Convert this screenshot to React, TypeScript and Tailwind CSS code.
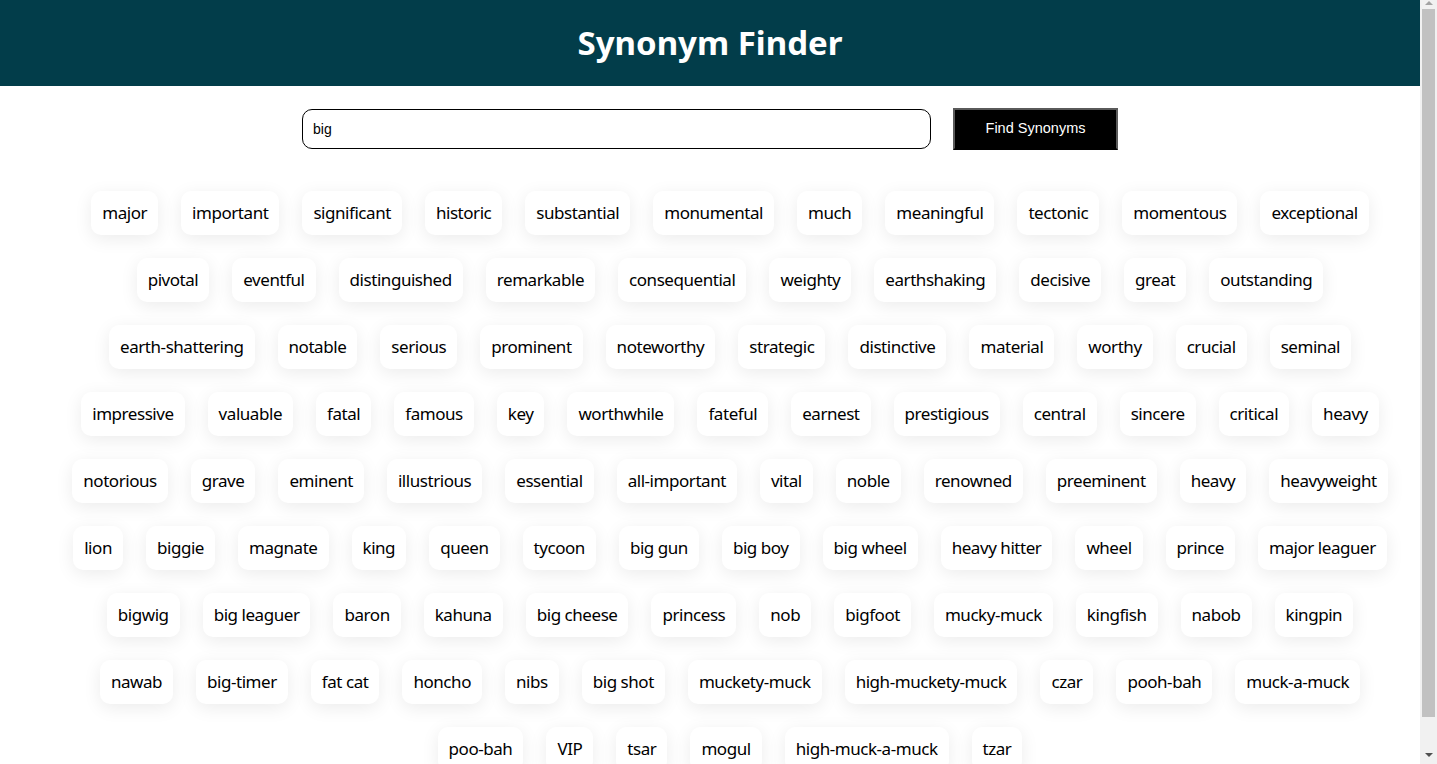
import { useState } from "react";

const synonyms = [
  "major", "important", "significant", "historic", "substantial", "monumental", "much", "meaningful", "tectonic", "momentous", "exceptional",
  "pivotal", "eventful", "distinguished", "remarkable", "consequential", "weighty", "earthshaking", "decisive", "great", "outstanding",
  "earth-shattering", "notable", "serious", "prominent", "noteworthy", "strategic", "distinctive", "material", "worthy", "crucial", "seminal",
  "impressive", "valuable", "fatal", "famous", "key", "worthwhile", "fateful", "earnest", "prestigious", "central", "sincere", "critical", "heavy",
  "notorious", "grave", "eminent", "illustrious", "essential", "all-important", "vital", "noble", "renowned", "preeminent", "heavy", "heavyweight",
  "lion", "biggie", "magnate", "king", "queen", "tycoon", "big gun", "big boy", "big wheel", "heavy hitter", "wheel", "prince", "major leaguer",
  "bigwig", "big leaguer", "baron", "kahuna", "big cheese", "princess", "nob", "bigfoot", "mucky-muck", "kingfish", "nabob", "kingpin",
  "nawab", "big-timer", "fat cat", "honcho", "nibs", "big shot", "muckety-muck", "high-muckety-muck", "czar", "pooh-bah", "muck-a-muck",
  "poo-bah", "VIP", "tsar", "mogul", "high-muck-a-muck", "tzar",
];

const ScrollBar = () => (
  <div className="fixed right-0 top-0 flex h-screen w-[17px] flex-col items-center bg-[#f1f1f1]">
    <div className="mt-[1px] h-0 w-0 border-x-[4px] border-b-[4px] border-x-transparent border-b-[#a3a3a3]" />
    <div className="mt-[4px] h-[708px] w-[13px] bg-[#c1c1c1]" />
    <div className="mt-auto mb-[7px] h-0 w-0 border-x-[4px] border-t-[4px] border-x-transparent border-t-[#505050]" />
  </div>
);

export default function App() {
  const [word, setWord] = useState("big");

  return (
    <div className="min-h-screen bg-white font-['Noto_Sans',sans-serif] text-black">
      <div className="w-[1420px]">
        <header className="flex h-[86px] items-center justify-center bg-[#023d4a]">
          <h1 className="text-[33px] font-bold text-white">Synonym Finder</h1>
        </header>

        <form
          className="mt-[22px] flex items-center justify-center gap-[22px]"
          onSubmit={(e) => e.preventDefault()}
        >
          <input
            value={word}
            onChange={(e) => setWord(e.target.value)}
            className="h-[40px] w-[629px] rounded-[10px] border border-black px-[10px] font-['Liberation_Sans',Arial,sans-serif] text-[14px] outline-none"
          />
          <button
            type="submit"
            className="h-[42px] w-[165px] border-2 border-t-[#5a5a5a] border-l-[#5a5a5a] border-r-[#5a5a5a] border-b-black bg-black font-['Liberation_Sans',Arial,sans-serif] text-[14.5px] text-white"
          >
            Find Synonyms
          </button>
        </form>

        <ul className="mt-[41px] flex flex-wrap justify-center gap-[23px] pl-[60px] pr-[20px] pb-[18px]">
          {synonyms.map((s, i) => (
            <li
              key={i}
              className="flex h-[44px] items-center rounded-[10px] bg-white px-[11px] text-[17px] tracking-[-0.45px] shadow-[0_4px_18px_rgba(0,0,0,0.08)]"
            >
              {s}
            </li>
          ))}
        </ul>
      </div>
      <ScrollBar />
    </div>
  );
}
